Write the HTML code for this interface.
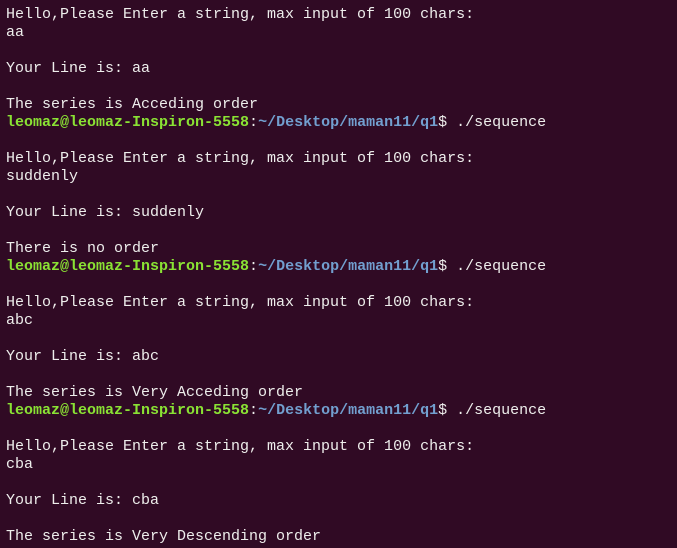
<!DOCTYPE html>
<html><head><style>
html,body{margin:0;padding:0;background:#300a24;width:677px;height:548px;overflow:hidden}
pre{margin:0;position:absolute;left:6px;top:6px;font-family:"Liberation Mono",monospace;font-size:15px;line-height:18px;color:#eeeeec}
.g{color:#8ae234;font-weight:bold}.b{color:#729fcf;font-weight:bold}
</style></head><body><pre>Hello,Please Enter a string, max input of 100 chars:
aa

Your Line is: aa

The series is Acceding order
<span class="g">leomaz@leomaz-Inspiron-5558</span>:<span class="b">~/Desktop/maman11/q1</span>$ ./sequence

Hello,Please Enter a string, max input of 100 chars:
suddenly

Your Line is: suddenly

There is no order
<span class="g">leomaz@leomaz-Inspiron-5558</span>:<span class="b">~/Desktop/maman11/q1</span>$ ./sequence

Hello,Please Enter a string, max input of 100 chars:
abc

Your Line is: abc

The series is Very Acceding order
<span class="g">leomaz@leomaz-Inspiron-5558</span>:<span class="b">~/Desktop/maman11/q1</span>$ ./sequence

Hello,Please Enter a string, max input of 100 chars:
cba

Your Line is: cba

The series is Very Descending order</pre></body></html>
